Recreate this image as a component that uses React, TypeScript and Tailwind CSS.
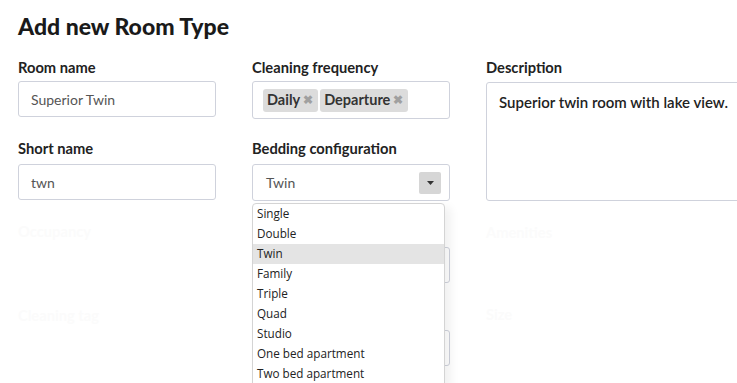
import { useState } from 'react';

const options = [
  'Single',
  'Double',
  'Twin',
  'Family',
  'Triple',
  'Quad',
  'Studio',
  'One bed apartment',
  'Two bed apartment',
];

function Tag({ label }: { label: string }) {
  return (
    <span className="flex h-[23px] items-center gap-[3px] rounded-[3px] bg-[#dcdcdc] pl-[4px] pr-[5px] text-[14.5px] font-bold text-[#333]">
      {label}
      <span className="text-[12px] leading-none text-[#a0a0a0]">✖</span>
    </span>
  );
}

function App() {
  const [selected] = useState('Twin');

  return (
    <div className="relative h-[383px] w-[737px] overflow-hidden bg-white pl-[18px] pt-[12px] font-['Lato',sans-serif] text-[#222]">
      <h1 className="text-[23px] font-black leading-[28px] text-[#1a1a1a]">Add new Room Type</h1>

      <div className="mt-[18px] grid grid-cols-[198px_198px_260px] gap-x-[36px]">
        {/* column 1 */}
        <div className="flex flex-col">
          <label className="text-[14.7px] font-bold leading-[18px]">Room name</label>
          <div className="mt-[5px] flex h-[36px] items-center rounded-[3px] border border-[#cfd2dc] px-[12px] text-[14px] text-[#555]">
            Superior Twin
          </div>
          <label className="mt-[22px] text-[14.7px] font-bold leading-[18px]">Short name</label>
          <div className="mt-[7px] flex h-[36px] items-center rounded-[3px] border border-[#cfd2dc] px-[12px] text-[14px] text-[#555]">
            twn
          </div>
          <label className="mt-[22px] text-[14.7px] font-bold leading-[18px] text-[#fbfbfb]">Occupancy</label>
          <div className="mt-[8px] h-[36px]" />
          <label className="mt-[22px] text-[14.7px] font-bold leading-[18px] text-[#fbfbfb]">Cleaning tag</label>
        </div>

        {/* column 2 */}
        <div className="flex flex-col">
          <label className="text-[14.7px] font-bold leading-[18px]">Cleaning frequency</label>
          <div className="mt-[5px] flex h-[38px] items-center gap-[2px] rounded-[3px] border border-[#cfd2dc] px-[10px]">
            <Tag label="Daily" />
            <Tag label="Departure" />
          </div>
          <label className="mt-[20px] text-[14.7px] font-bold leading-[18px]">Bedding configuration</label>
          <div className="relative mt-[7px]">
            <div className="flex h-[37px] items-center justify-between rounded-[3px] border border-[#cfd2dc] pl-[13px] pr-[8px] text-[14px] text-[#555]">
              {selected}
              <span className="flex h-[22px] w-[22px] items-center justify-center rounded-[2px] bg-[#d6d6d6]">
                <svg width="7" height="4" viewBox="0 0 7 4">
                  <path d="M0 0h7L3.5 4z" fill="#333" />
                </svg>
              </span>
            </div>

            <ul className="absolute left-0 top-full z-10 mt-[2px] w-[193px] rounded-t-[4px] border border-[#d4d4d4] bg-white font-['Open_Sans',sans-serif] text-[11.7px] text-[#222] shadow-[6px_4px_10px_rgba(0,0,0,0.06)]">
              {options.map((o) => (
                <li
                  key={o}
                  className={
                    o === selected
                      ? 'flex h-[20px] items-center bg-[#e4e4e4] px-[4px]'
                      : 'flex h-[20px] items-center px-[4px]'
                  }
                >
                  {o}
                </li>
              ))}
            </ul>
          </div>
          <div className="mt-[46px] h-[36px] rounded-[3px] border border-[#cfd2dc]" />
          <div className="mt-[47px] h-[36px] rounded-[3px] border border-[#cfd2dc]" />
        </div>

        {/* column 3 */}
        <div className="flex flex-col">
          <label className="text-[14.7px] font-bold leading-[18px]">Description</label>
          <div className="mt-[6px] h-[119px] rounded-[3px] border border-[#cfd2dc] px-[12px] pt-[8px] text-[15px] font-semibold text-[#222]">
            Superior twin room with lake view.
          </div>
          <label className="mt-[22px] text-[14.7px] font-bold leading-[18px] text-[#fbfbfb]">Amenities</label>
          <label className="mt-[64px] text-[14.7px] font-bold leading-[18px] text-[#fbfbfb]">Size</label>
        </div>
      </div>
    </div>
  );
}

export default App;
